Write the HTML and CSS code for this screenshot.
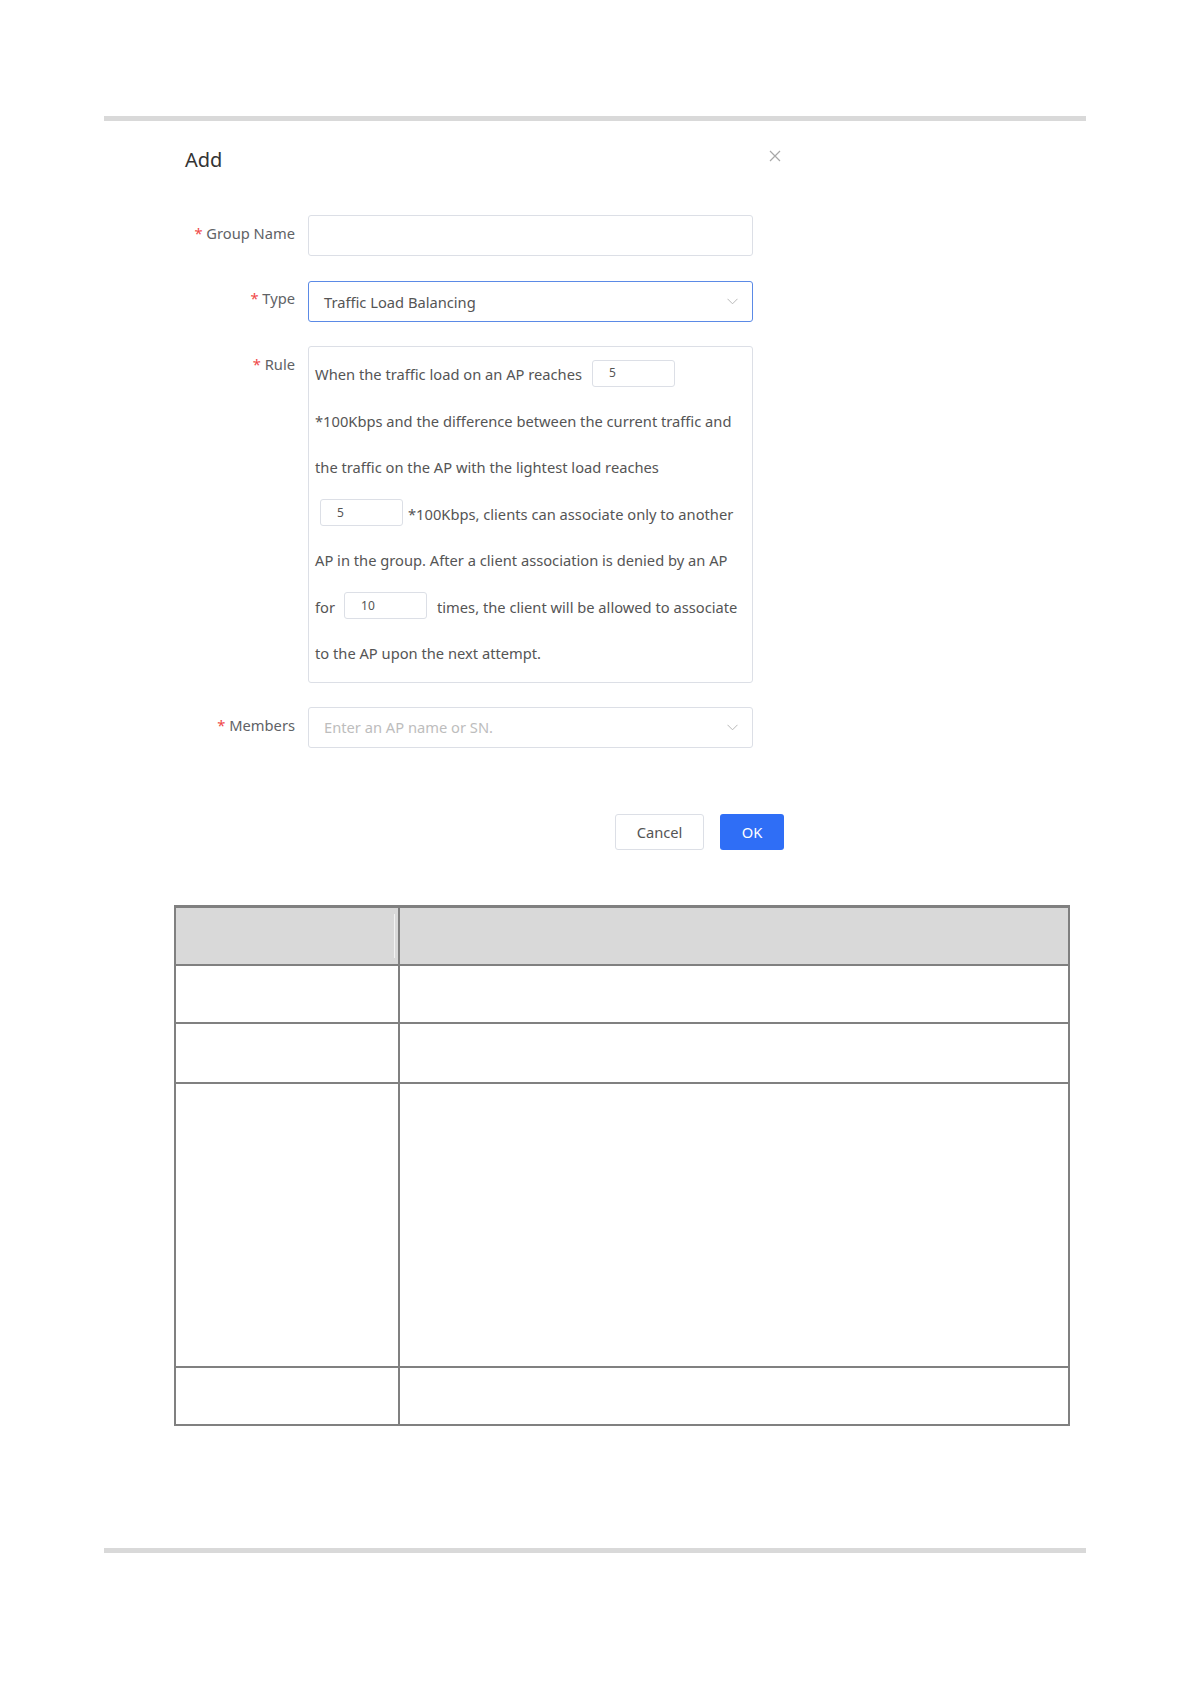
FILE: index.html
```html
<!DOCTYPE html>
<html>
<head>
<meta charset="utf-8">
<link rel="stylesheet" href="styles.css">
</head>
<body>
<div class="page">
  <div class="rule"></div>
  <div class="dialog">
    <div class="dlg-head">
      <div class="title">Add</div>
      <svg class="close" width="12" height="12" viewBox="0 0 12 12"><path d="M1 1L11 11M11 1L1 11" stroke="#a8a8a8" stroke-width="1.2" fill="none"/></svg>
    </div>
    <div class="form">
      <div class="row">
        <div class="label"><span class="req">*</span> Group Name</div>
        <div class="input"></div>
      </div>
      <div class="row">
        <div class="label"><span class="req">*</span> Type</div>
        <div class="input select focused"><span class="val">Traffic Load Balancing</span>
          <svg class="chev" width="11" height="7" viewBox="0 0 11 7"><path d="M0.5 0.8L5.5 5.8L10.5 0.8" stroke="#b8b8b8" stroke-width="1" fill="none"/></svg>
        </div>
      </div>
      <div class="row">
        <div class="label"><span class="req">*</span> Rule</div>
        <div class="rulebox">
          <div class="ln">When the traffic load on an AP reaches <span class="num n1">5</span></div>
          <div class="ln">*100Kbps and the difference between the current traffic and</div>
          <div class="ln">the traffic on the AP with the lightest load reaches</div>
          <div class="ln"><span class="num n2">5</span> *100Kbps, clients can associate only to another</div>
          <div class="ln">AP in the group. After a client association is denied by an AP</div>
          <div class="ln">for <span class="num n3">10</span> times, the client will be allowed to associate</div>
          <div class="ln">to the AP upon the next attempt.</div>
        </div>
      </div>
      <div class="row">
        <div class="label"><span class="req">*</span> Members</div>
        <div class="input select"><span class="ph">Enter an AP name or SN.</span>
          <svg class="chev" width="11" height="7" viewBox="0 0 11 7"><path d="M0.5 0.8L5.5 5.8L10.5 0.8" stroke="#b8b8b8" stroke-width="1" fill="none"/></svg>
        </div>
      </div>
    </div>
    <div class="footer">
      <div class="btn cancel">Cancel</div>
      <div class="btn ok">OK</div>
    </div>
  </div>
  <table class="tbl">
    <tr class="hd"><td class="c1"><span class="wl"></span></td><td class="c2"></td></tr>
    <tr class="r1"><td></td><td></td></tr>
    <tr class="r2"><td></td><td></td></tr>
    <tr class="r3"><td></td><td></td></tr>
    <tr class="r4"><td></td><td></td></tr>
  </table>
  <div class="rule bottom"></div>
</div>
</body>
</html>
```

FILE: styles.css
```css
html, body {
  margin: 0;
  padding: 0;
  background: #ffffff;
}
body {
  font-family: "Noto Sans", "Open Sans", "Liberation Sans", sans-serif;
  color: #555;
}
.page {
  padding-top: 116px;
  width: 1191px;
}
.rule {
  margin-left: 104px;
  width: 982px;
  height: 5px;
  background: #d9d9d9;
}
.rule.bottom {
  margin-top: 122px;
}
.dialog {
  margin-left: 185px;
  width: 599px;
}
.dlg-head {
  display: flex;
  justify-content: space-between;
  align-items: flex-start;
  margin-top: 25px;
  height: 28px;
  margin-bottom: 41px;
}
.title {
  font-size: 20px;
  line-height: 28px;
  color: #333;
}
.close {
  margin-top: 4px;
  margin-right: 3px;
}
.form {
  display: flex;
  flex-direction: column;
  gap: 24px;
}
.row {
  display: flex;
  align-items: flex-start;
  gap: 13px;
}
.row + .row + .row {
  margin-top: 0;
}
.label {
  width: 110px;
  text-align: right;
  font-size: 14.7px;
  line-height: 37px;
  color: #606266;
  white-space: nowrap;
}
.req {
  color: #f04848;
}
.input {
  width: 445px;
  height: 41px;
  box-sizing: border-box;
  border: 1px solid #dcdfe6;
  border-radius: 3px;
  background: #fff;
  display: flex;
  align-items: center;
  padding: 0 15px;
  font-size: 14.7px;
}
.input.focused {
  border-color: #5b8ae6;
  margin-top: 1px;
}
.select {
  justify-content: space-between;
}
.val {
  color: #555;
}
.ph {
  color: #bdbdbd;
}
.chev {
  margin-right: -1px;
}
.rulebox {
  width: 445px;
  box-sizing: border-box;
  border: 1px solid #dcdfe6;
  border-radius: 3px;
  padding: 4px 6px 5px;
  font-size: 14.7px;
  color: #555;
}
.ln {
  line-height: 46.5px;
  height: 46.5px;
  white-space: nowrap;
  display: flex;
  align-items: center;
}
.num {
  display: inline-flex;
  align-items: center;
  box-sizing: border-box;
  width: 83px;
  height: 27px;
  border: 1px solid #dcdfe6;
  border-radius: 3px;
  padding-left: 16px;
  font-size: 12px;
  color: #555;
  margin-top: -2px;
}
.n1 { margin-left: 10px; }
.n2 { margin-left: 5px; margin-right: 5px; }
.n3 { margin-left: 9px; margin-right: 10px; }
.footer {
  display: flex;
  justify-content: flex-end;
  gap: 16px;
  margin-top: 66px;
}
.btn {
  height: 36px;
  box-sizing: border-box;
  border-radius: 3px;
  display: flex;
  align-items: center;
  justify-content: center;
  font-size: 14.7px;
}
.cancel {
  width: 89px;
  border: 1px solid #dcdfe6;
  color: #555;
  background: #fff;
}
.ok {
  width: 64px;
  background: #2f6ef6;
  color: #fff;
}
.tbl {
  margin-top: 55px;
  margin-left: 174px;
  border-collapse: collapse;
  width: 896px;
  table-layout: fixed;
}
.tbl td {
  border: 2px solid #808080;
  padding: 0;
}
.tbl .c1 { width: 222px; position: relative; }
.hd td {
  background: #d9d9d9;
  height: 56px;
  border-top-width: 3px;
}
.wl {
  position: absolute;
  right: 3px;
  top: 6px;
  bottom: 6px;
  width: 1px;
  background: #f4f4f4;
}
.r1 td { height: 56px; }
.r2 td { height: 58px; }
.r3 td { height: 282px; }
.r4 td { height: 56px; }
```
